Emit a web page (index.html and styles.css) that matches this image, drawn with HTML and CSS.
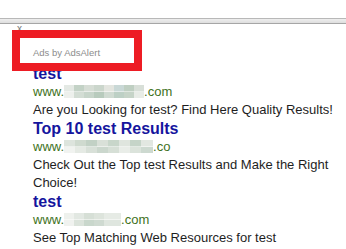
FILE: index.html
```html
<!DOCTYPE html>
<html>
<head>
    <title>Ads by AdsAlert</title>
    <link rel="stylesheet" href="styles.css">
</head>
<body>
    <div class="topbar"></div>
    <div class="ad">
        <div class="close">x</div>
        <div class="label">Ads by AdsAlert</div>
        <div class="listing">
            <a class="title" href="#">test</a>
            <div class="url">www.<span class="blur blur-a"></span>.com</div>
            <div class="desc">Are you Looking for test? Find Here Quality Results!</div>
        </div>
        <div class="listing">
            <a class="title" href="#">Top 10 test Results</a>
            <div class="url">www.<span class="blur blur-b"></span>.co</div>
            <div class="desc">Check Out the Top test Results and Make the Right Choice!</div>
        </div>
        <div class="listing">
            <a class="title" href="#">test</a>
            <div class="url">www.<span class="blur blur-c"></span>.com</div>
            <div class="desc">See Top Matching Web Resources for test</div>
        </div>
    </div>
    <div class="highlight"></div>
</body>
</html>
```

FILE: styles.css
```css
body {
    margin: 0;
    background-color: #fff;
    font-family: "Liberation Sans", Arial, sans-serif;
    position: relative;
    height: 249px;
    overflow: hidden;
}
.topbar {
    margin-top: 18px;
    height: 4px;
    border-top: 1px solid #b8b8b8;
    border-bottom: 1px solid #a6a6a6;
    background: linear-gradient(#eeeeee, #dedede);
}
.ad {
    padding-left: 17px;
}
.close {
    font-size: 10px;
    line-height: 10px;
    color: #7a7a7a;
}
.label {
    margin: 10px 0 2px 16px;
    font-size: 9.5px;
    line-height: 18px;
    color: #8c8c8c;
}
.listing {
    padding-left: 16px;
    width: 310px;
}
.title {
    display: block;
    font-size: 16px;
    font-weight: bold;
    line-height: 19px;
    color: #15159e;
    text-decoration: none;
}
.url {
    font-size: 13px;
    line-height: 18px;
    color: #41721c;
}
.desc {
    font-size: 13px;
    line-height: 18px;
    color: #1e1e1e;
}
.blur {
    display: inline-block;
    height: 13px;
    vertical-align: -2px;
}
.blur-a {
    width: 80px;
    background:
        linear-gradient(90deg, #e4e9e4 0 10px, #c3d2c6 10px 20px, #d6ddd5 20px 30px, #cbd6cc 30px 40px, #e3e5df 40px 50px, #c9d8d6 50px 60px, #bfcfc2 60px 70px, #d8dfd8 70px) top / 100% 50% no-repeat,
        linear-gradient(90deg, #edf0ec 0 10px, #d3ddd4 10px 20px, #c7d5ca 20px 30px, #b8cbbd 30px 40px, #d0dbd2 40px 50px, #bdd0c5 50px 60px, #c6d4c8 60px 70px, #e8ece7 70px) bottom / 100% 50% no-repeat;
}
.blur-b {
    width: 89px;
    background:
        linear-gradient(90deg, #dde4dd 0 11px, #cfdacf 11px 22px, #c2d1c5 22px 33px, #d9e0d8 33px 44px, #c8d6ca 44px 55px, #dfe5de 55px 66px, #c5d4c8 66px 77px, #e2e7e1 77px) top / 100% 50% no-repeat,
        linear-gradient(90deg, #f1f3f0 0 11px, #e5eae4 11px 22px, #d8e0d8 22px 33px, #cbd7cd 33px 44px, #d6dfd6 44px 55px, #e9ede8 55px 66px, #dbe3db 66px 77px, #cdd9d0 77px) bottom / 100% 50% no-repeat;
}
.blur-c {
    width: 57px;
    background:
        linear-gradient(90deg, #eef1ed 0 10px, #e2e8e2 10px 20px, #d6dfd6 20px 30px, #dde4dc 30px 40px, #e6ebe5 40px) top / 100% 50% no-repeat,
        linear-gradient(90deg, #f0f2ef 0 10px, #dbe3db 10px 20px, #c9d7cc 20px 30px, #cfdad1 30px 40px, #dfe6df 40px) bottom / 100% 50% no-repeat;
}
.highlight {
    position: absolute;
    left: 12px;
    top: 30px;
    width: 130px;
    height: 41px;
    box-sizing: border-box;
    border: 8px solid #ed1c24;
}
```
